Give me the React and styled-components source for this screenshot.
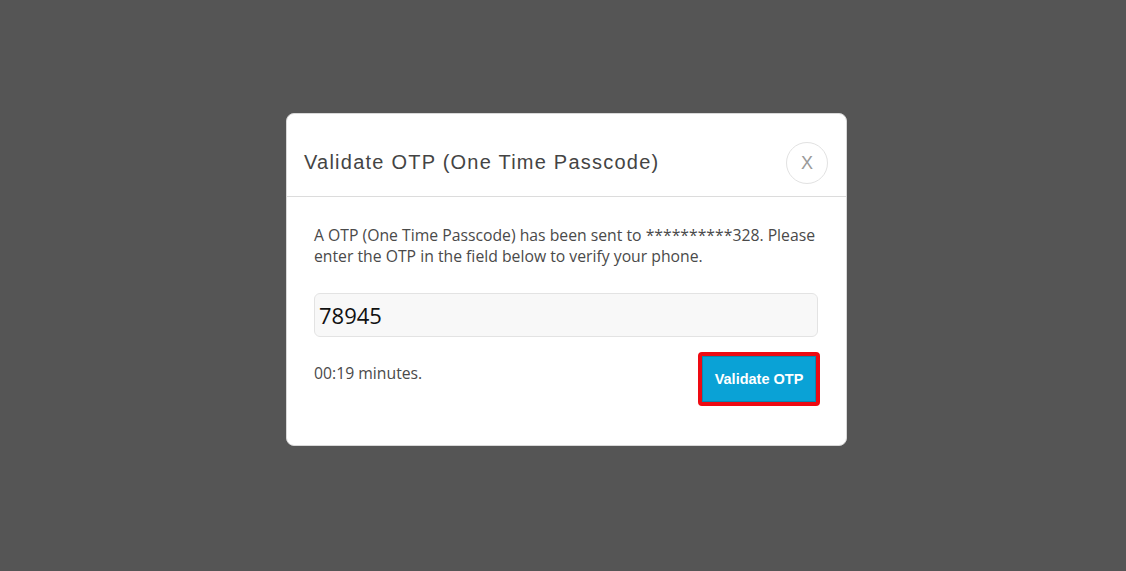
import styled, { createGlobalStyle } from "styled-components";

const GlobalStyle = createGlobalStyle`
  html, body {
    margin: 0;
    padding: 0;
    background: #555555;
  }
  * {
    box-sizing: border-box;
  }
`;

export default function App() {
  return (
    <>
      <GlobalStyle />
      <Overlay>
        <Modal>
          <ModalHeader>
            <ModalTitle>Validate OTP (One Time Passcode)</ModalTitle>
            <CloseButton aria-label="close">X</CloseButton>
          </ModalHeader>
          <ModalBody>
            <Message>
              A OTP (One Time Passcode) has been sent to **********328. Please
              enter the OTP in the field below to verify your phone.
            </Message>
            <OtpInput defaultValue="78945" />
            <ActionRow>
              <Timer>00:19 minutes.</Timer>
              <Highlight>
                <ValidateButton>Validate OTP</ValidateButton>
              </Highlight>
            </ActionRow>
          </ModalBody>
        </Modal>
      </Overlay>
    </>
  );
}

const Overlay = styled.div`
  width: 1126px;
  height: 571px;
  display: flex;
  justify-content: center;
  align-items: flex-start;
  padding: 113px 0 0 7px;
`;

const Modal = styled.div`
  width: 561px;
  height: 333px;
  background: #ffffff;
  border-radius: 8px;
  border: 1px solid #d8d8d8;
  display: flex;
  flex-direction: column;
  overflow: hidden;
`;

const ModalHeader = styled.div`
  display: flex;
  align-items: center;
  justify-content: space-between;
  padding: 28px 18px 12px 17px;
  border-bottom: 1px solid #dcdcdc;
`;

const ModalTitle = styled.h4`
  margin: 0 0 2px;
  font-family: "Liberation Sans", Arial, sans-serif;
  font-weight: normal;
  font-size: 20px;
  letter-spacing: 1.23px;
  color: #444444;
`;

const CloseButton = styled.button`
  width: 42px;
  height: 42px;
  border-radius: 50%;
  border: 1px solid #e2e2e2;
  background: #ffffff;
  color: #9a9a9a;
  font-family: "Liberation Sans", Arial, sans-serif;
  font-size: 18px;
  padding: 0;
  display: flex;
  align-items: center;
  justify-content: center;
`;

const ModalBody = styled.div`
  padding: 28px 28px 0 27px;
  display: flex;
  flex-direction: column;
`;

const Message = styled.p`
  margin: 0;
  font-family: "Open Sans", sans-serif;
  font-size: 15.75px;
  line-height: 21px;
  color: #4a4a4a;
`;

const OtpInput = styled.input`
  margin-top: 26px;
  height: 44px;
  width: 100%;
  background: #f8f8f8;
  border: 1px solid #e3e3e3;
  border-radius: 6px;
  padding: 0 4px;
  font-family: "Open Sans", sans-serif;
  font-size: 22px;
  color: #111111;
  outline: none;
`;

const ActionRow = styled.div`
  margin-top: 15px;
  display: flex;
  justify-content: space-between;
  align-items: flex-start;
`;

const Timer = styled.span`
  margin-top: 11px;
  font-family: "Open Sans", sans-serif;
  font-size: 15.75px;
  line-height: 21px;
  color: #4a4a4a;
`;

const Highlight = styled.div`
  margin-right: -2px;
  border: 4px solid #ee0a12;
  border-radius: 4px;
  padding: 0;
  display: flex;
`;

const ValidateButton = styled.button`
  width: 114px;
  height: 46px;
  background: #0aa2d6;
  border: 1px solid #0b86b0;
  color: #ffffff;
  font-family: "Liberation Sans", Arial, sans-serif;
  font-weight: bold;
  font-size: 14.5px;
  padding: 0;
`;
